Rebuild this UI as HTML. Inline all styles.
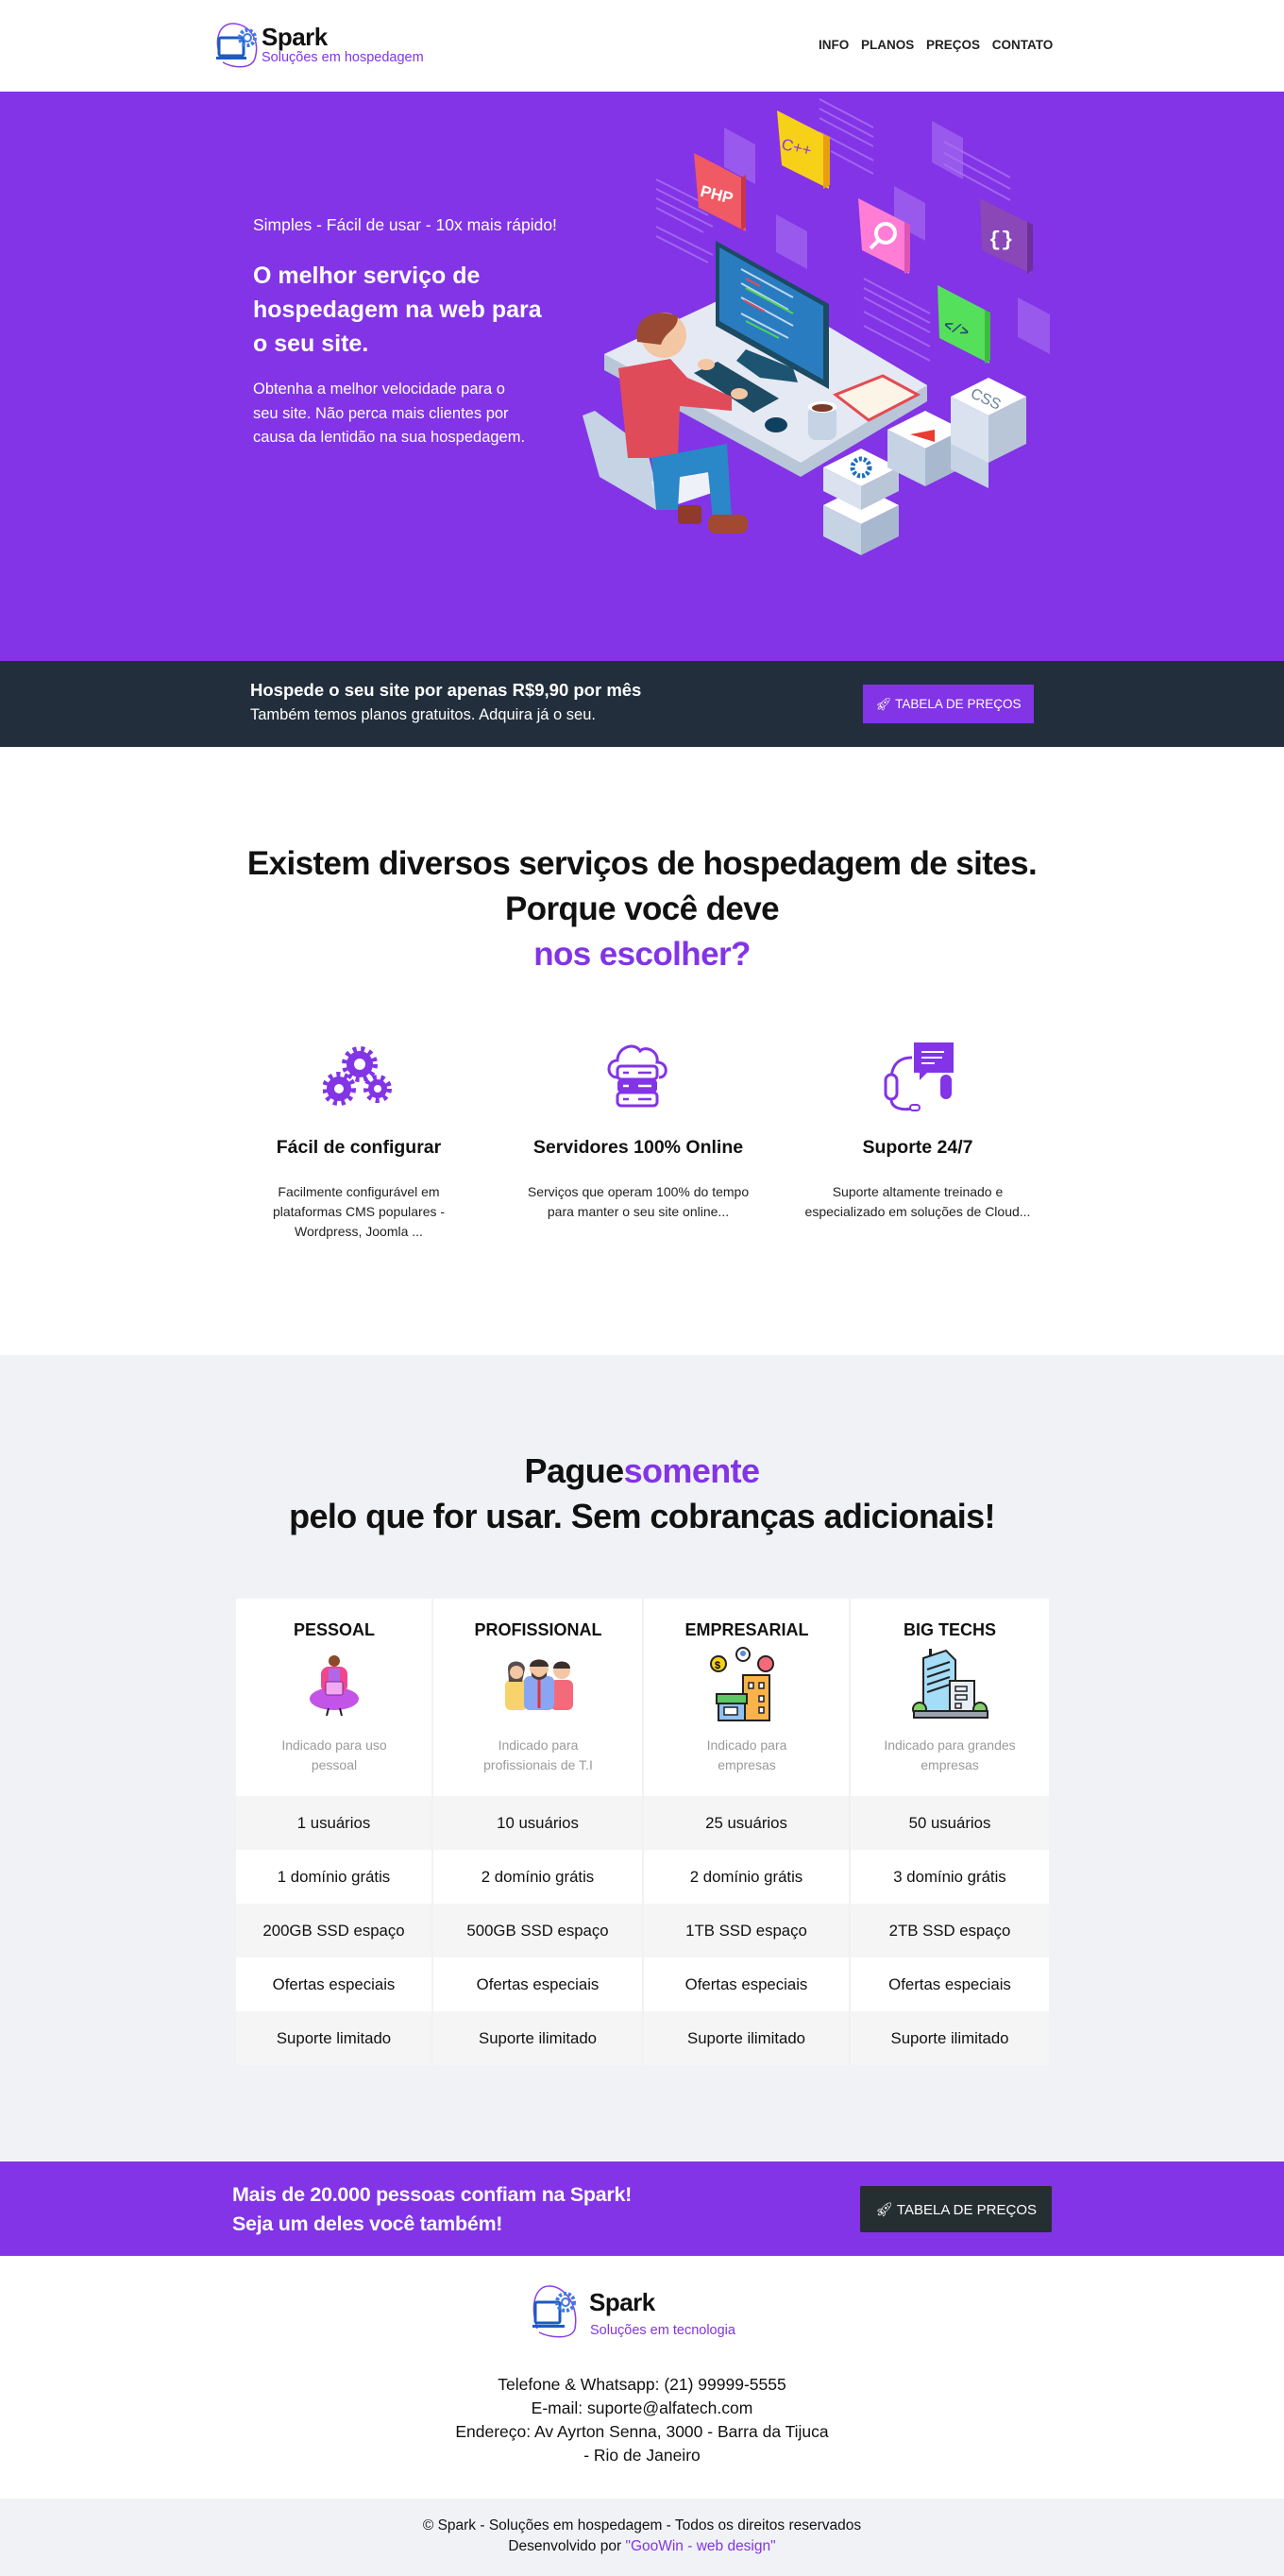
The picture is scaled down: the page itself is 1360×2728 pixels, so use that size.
<!DOCTYPE html>
<html><head><meta charset="utf-8">
<style>
*{margin:0;padding:0;box-sizing:border-box}
body{width:1360px;height:2728px;position:relative;font-family:"Liberation Sans",sans-serif;color:#111;background:#fff;overflow:hidden}
.a{position:absolute}
.c{text-align:center}
.pur{color:#8234e6}
.btn{position:absolute;display:flex;align-items:center;justify-content:center;color:#fff;font-size:15px;gap:10px}
</style></head><body>

<!-- header -->
<svg class="a" style="left:226px;top:22px" width="52" height="52" viewBox="0 0 52 52">
<path d="M8 40 C0 20 6 2 22 3 C38 4 50 20 44 40 C40 52 20 50 10 44" fill="none" stroke="#8a3fe8" stroke-width="1.5"/>
<rect x="6" y="18" width="26" height="19" rx="2" fill="none" stroke="#1d5bbf" stroke-width="3"/>
<rect x="3" y="38" width="32" height="3" fill="#1d5bbf"/>
<circle cx="36" cy="18" r="8" fill="none" stroke="#3f7be0" stroke-width="4" stroke-dasharray="3 2"/>
<circle cx="36" cy="18" r="4" fill="#fff" stroke="#3f7be0" stroke-width="2"/>
</svg>
<div class="a" style="left:277px;top:24px;font-size:26px;font-weight:bold;letter-spacing:-0.5px">Spark</div>
<div class="a pur" style="left:277px;top:53px;font-size:14.5px">Soluções em hospedagem</div>
<div class="a" style="left:867px;top:40px;font-size:13.5px;font-weight:bold;color:#222;word-spacing:9px">INFO PLANOS PREÇOS CONTATO</div>

<!-- hero -->
<div class="a" style="left:0;top:97px;width:1360px;height:603px;background:#8234e6"></div>
<div class="a" style="left:268px;top:228px;color:#fff;font-size:17.5px">Simples - Fácil de usar - 10x mais rápido!</div>
<div class="a" style="left:268px;top:274px;color:#fff;font-size:25px;font-weight:bold;line-height:36px;width:322px">O melhor serviço de hospedagem na web para o seu site.</div>
<div class="a" style="left:268px;top:400px;color:#fff;font-size:16.5px;line-height:25.5px;white-space:nowrap">Obtenha a melhor velocidade para o<br>seu site. Não perca mais clientes por<br>causa da lentidão na sua hospedagem.</div>

<svg class="a" style="left:600px;top:100px" width="520" height="500" viewBox="0 0 520 500">
<g fill="#9f63ee" opacity="0.8">
<polygon points="167,35 200,53 200,95 167,77"/><polygon points="222,127 255,145 255,185 222,167"/><polygon points="347,97 380,115 380,155 347,137"/><polygon points="387,28 420,46 420,90 387,72"/><polygon points="478,215 512,233 512,275 478,257"/>
</g>
<g stroke="#a973f0" stroke-width="2" opacity="0.8">
<line x1="95" y1="90" x2="155" y2="120"/><line x1="95" y1="100" x2="150" y2="128"/><line x1="95" y1="110" x2="155" y2="140"/><line x1="95" y1="120" x2="145" y2="146"/><line x1="95" y1="140" x2="155" y2="170"/><line x1="95" y1="150" x2="150" y2="178"/>
<line x1="268" y1="5" x2="325" y2="35"/><line x1="268" y1="15" x2="325" y2="45"/><line x1="268" y1="25" x2="325" y2="55"/><line x1="268" y1="40" x2="325" y2="70"/><line x1="280" y1="60" x2="325" y2="84"/>
<line x1="315" y1="195" x2="385" y2="232"/><line x1="315" y1="205" x2="385" y2="242"/><line x1="315" y1="215" x2="385" y2="252"/><line x1="315" y1="230" x2="385" y2="267"/><line x1="315" y1="245" x2="385" y2="282"/>
<line x1="400" y1="50" x2="470" y2="88"/><line x1="400" y1="62" x2="470" y2="100"/><line x1="400" y1="74" x2="470" y2="112"/>
</g>
<polygon points="135,62 185,88 190,145 140,120" fill="#ef5a64"/><polygon points="185,88 190,85 190,140 185,145" fill="#c9364a"/>
<text x="142" y="112" font-family="Liberation Sans" font-weight="bold" font-size="17" fill="#fff" transform="rotate(14 160 105)">PHP</text>
<polygon points="223,17 272,42 278,100 228,75" fill="#f7d117"/><polygon points="272,42 279,45 279,96 272,100" fill="#e79f0f"/>
<text x="228" y="62" font-family="Liberation Sans" font-size="17" fill="#8a3fd0" transform="rotate(14 245 55)">C++</text>
<polygon points="309,110 358,135 363,190 313,165" fill="#ff7dd4"/><polygon points="358,135 364,138 364,187 358,190" fill="#dd55b6"/>
<circle cx="338" cy="147" r="10" fill="none" stroke="#fff" stroke-width="4"/><line x1="330" y1="155" x2="322" y2="163" stroke="#fff" stroke-width="4"/>
<polygon points="438,110 488,135 493,190 440,165" fill="#8a47b8"/><polygon points="488,135 494,138 494,186 488,190" fill="#6d2f9b"/>
<text x="447" y="160" font-family="Liberation Mono" font-weight="bold" font-size="22" fill="#fff">{}</text>
<polygon points="393,202 443,228 448,285 395,258" fill="#55e05b"/><polygon points="443,228 449,231 449,281 443,285" fill="#3cba42"/>
<text x="400" y="255" font-family="Liberation Mono" font-weight="bold" font-size="15" fill="#24486a" transform="rotate(20 420 248)">&lt;/&gt;</text>
<polygon points="40,275 200,200 382,308 382,325 248,405 40,292" fill="#b9c6d8"/>
<polygon points="40,275 200,200 382,308 248,390" fill="#e5e9f3"/>
<polygon points="190,270 240,290 245,305 205,300 180,282" fill="#1c5472"/>
<polygon points="158,155 278,222 278,312 158,245" fill="#1b4a63"/>
<polygon points="162,162 272,224 272,302 162,240" fill="#2a7cc1"/>
<g stroke="#fff" stroke-width="2" opacity="0.7"><line x1="185" y1="185" x2="240" y2="215"/><line x1="185" y1="200" x2="235" y2="228"/><line x1="185" y1="215" x2="240" y2="245"/><line x1="185" y1="232" x2="235" y2="258"/></g>
<g stroke="#4fd35a" stroke-width="2"><line x1="190" y1="205" x2="240" y2="232"/><line x1="190" y1="240" x2="225" y2="258"/></g>
<g stroke="#e04b5a" stroke-width="2"><line x1="190" y1="195" x2="205" y2="203"/><line x1="188" y1="218" x2="210" y2="230"/></g>
<polygon points="135,295 160,283 225,322 198,337" fill="#1d4b63"/>
<ellipse cx="222" cy="350" rx="12" ry="8" fill="#0f4060"/>
<polygon points="285,318 335,298 372,318 320,345" fill="#fdf4e8" stroke="#e34a52" stroke-width="3"/>
<rect x="256" y="330" width="30" height="36" rx="8" fill="#c5d3e5"/><ellipse cx="271" cy="331" rx="15" ry="6" fill="#fff"/><ellipse cx="271" cy="332" rx="11" ry="4" fill="#7a3b28"/>
<polygon points="17,340 30,335 85,375 100,435 95,440 35,405" fill="#c5d3e5"/>
<polygon points="90,410 150,400 160,420 100,440" fill="#eef1f7"/>
<polygon points="55,290 110,280 128,300 175,320 175,335 120,330 118,385 65,385" fill="#e04b5a"/>
<polygon points="90,385 170,370 175,450 155,450 150,400 120,405 118,440 95,440" fill="#2a87c8"/>
<rect x="118" y="435" width="25" height="20" rx="4" fill="#8f3a2b"/><rect x="150" y="445" width="42" height="20" rx="8" fill="#a2492f"/>
<circle cx="103" cy="255" r="24" fill="#f3c6a4"/><path d="M75 262 C70 235 95 225 118 235 C118 250 105 250 100 265 Z" fill="#9a4a33"/>
<ellipse cx="183" cy="317" rx="9" ry="6" fill="#f3c6a4"/><ellipse cx="148" cy="286" rx="9" ry="6" fill="#f3c6a4"/>
<g>
<polygon points="272,435 312,415 352,435 312,455" fill="#fff"/><polygon points="272,435 312,455 312,488 272,468" fill="#c5d3e5"/><polygon points="352,435 312,455 312,488 352,468" fill="#a8b9cf"/>
<polygon points="272,395 312,375 352,395 312,415" fill="#fff"/><polygon points="272,395 312,415 312,440 272,420" fill="#d9e2ee"/><polygon points="352,395 312,415 312,440 352,420" fill="#b9c6d8"/>
<circle cx="312" cy="395" r="9" fill="none" stroke="#1d6cc0" stroke-width="5" stroke-dasharray="3 2"/>
<polygon points="340,355 380,335 420,355 380,375" fill="#fff"/><polygon points="340,355 380,375 380,415 340,395" fill="#c5d3e5"/><polygon points="420,355 380,375 380,415 420,395" fill="#a8b9cf"/>
<polygon points="364,360 390,355 390,368" fill="#ea3c30"/>
<polygon points="407,357 447,377 447,417 407,397" fill="#c5d3e5"/>
<polygon points="407,320 447,300 487,320 447,340" fill="#fff"/><polygon points="407,320 447,340 447,390 407,370" fill="#d9e2ee"/><polygon points="487,320 447,340 447,390 487,370" fill="#b9c6d8"/>
<text x="428" y="328" font-family="Liberation Sans" font-size="16" fill="#6a7f98" transform="rotate(25 445 322)">CSS</text>
</g>
</svg>

<!-- dark band -->
<div class="a" style="left:0;top:700px;width:1360px;height:91px;background:#222e3b"></div>
<div class="a" style="left:265px;top:720px;color:#fff;font-size:18.5px;font-weight:bold">Hospede o seu site por apenas R$9,90 por mês</div>
<div class="a" style="left:265px;top:748px;color:#fff;font-size:16.5px">Também temos planos gratuitos. Adquira já o seu.</div>
<div class="btn" style="left:914px;top:725px;width:181px;height:41px;background:#8234e6;font-size:13.5px">&#x1F680;&#xFE0E; TABELA DE PREÇOS</div>

<!-- services -->
<div class="a c" style="left:0;top:891px;width:1360px;font-size:35px;font-weight:bold;line-height:48px;letter-spacing:-0.6px">Existem diversos serviços de hospedagem de sites.<br>Porque você deve<br><span class="pur">nos escolher?</span></div>
<svg class="a" style="left:342px;top:1107px" width="76" height="66" viewBox="0 0 76 66">
<g fill="#8234e6">
<circle cx="39" cy="20" r="14"/><circle cx="17" cy="46" r="13"/><circle cx="58" cy="46" r="10"/>
<g stroke="#8234e6" stroke-width="6" stroke-dasharray="4 4.5" fill="none"><circle cx="39" cy="20" r="16"/><circle cx="17" cy="46" r="15"/><circle cx="58" cy="46" r="12"/></g>
</g>
<circle cx="39" cy="20" r="6" fill="#fff"/><circle cx="17" cy="46" r="5" fill="#fff"/><circle cx="58" cy="46" r="4" fill="#fff"/>
</svg>
<svg class="a" style="left:640px;top:1105px" width="72" height="72" viewBox="0 0 72 72">
<path d="M14 36 C2 36 2 18 14 18 C14 4 32 -2 38 8 C44 2 58 8 56 20 C68 20 68 36 58 36" fill="none" stroke="#8234e6" stroke-width="3"/>
<rect x="14" y="24" width="42" height="14" rx="4" fill="#fff" stroke="#8234e6" stroke-width="3"/>
<rect x="14" y="38" width="42" height="14" rx="4" fill="#8234e6"/>
<rect x="14" y="52" width="42" height="14" rx="4" fill="#fff" stroke="#8234e6" stroke-width="3"/>
<g stroke="#8234e6" stroke-width="2.5"><line x1="20" y1="31" x2="26" y2="31"/><line x1="36" y1="31" x2="50" y2="31"/><line x1="20" y1="59" x2="26" y2="59"/><line x1="36" y1="59" x2="50" y2="59"/></g>
<g stroke="#fff" stroke-width="2.5"><line x1="20" y1="45" x2="26" y2="45"/><line x1="36" y1="45" x2="50" y2="45"/></g>
</svg>
<svg class="a" style="left:936px;top:1104px" width="76" height="74" viewBox="0 0 76 74">
<rect x="32" y="0" width="42" height="32" fill="#8234e6"/><polygon points="38,32 46,32 38,40" fill="#8234e6"/>
<g stroke="#fff" stroke-width="2"><line x1="40" y1="10" x2="64" y2="10"/><line x1="40" y1="16" x2="62" y2="16"/><line x1="40" y1="22" x2="54" y2="22"/></g>
<path d="M8 40 C8 22 18 16 30 16" fill="none" stroke="#8234e6" stroke-width="3"/>
<rect x="2" y="34" width="12" height="26" rx="6" fill="#fff" stroke="#8234e6" stroke-width="3"/>
<rect x="60" y="34" width="12" height="26" rx="6" fill="#8234e6"/>
<path d="M8 60 C8 70 20 72 30 70" fill="none" stroke="#8234e6" stroke-width="3"/>
<rect x="28" y="66" width="10" height="6" rx="3" fill="#fff" stroke="#8234e6" stroke-width="2"/>
</svg>
<div class="a c" style="left:230px;top:1204px;width:300px;font-size:19.5px;font-weight:bold">Fácil de configurar</div>
<div class="a c" style="left:526px;top:1204px;width:300px;font-size:19.5px;font-weight:bold">Servidores 100% Online</div>
<div class="a c" style="left:822px;top:1204px;width:300px;font-size:19.5px;font-weight:bold">Suporte 24/7</div>
<div class="a c" style="left:272px;top:1252px;width:216px;font-size:14px;line-height:21px;color:#222">Facilmente configurável em plataformas CMS populares - Wordpress, Joomla ...</div>
<div class="a c" style="left:546px;top:1252px;width:260px;font-size:14px;line-height:21px;color:#222">Serviços que operam 100% do tempo para manter o seu site online...</div>
<div class="a c" style="left:838px;top:1252px;width:268px;font-size:14px;line-height:21px;color:#222">Suporte altamente treinado e especializado em soluções de Cloud...</div>

<!-- pricing -->
<div class="a" style="left:0;top:1435px;width:1360px;height:853px;background:#f0f2f5"></div>
<div class="a c" style="left:0;top:1534px;width:1360px;font-size:36px;font-weight:bold;line-height:48px;letter-spacing:-0.6px">Pague<span class="pur">somente</span><br>pelo que for usar. Sem cobranças adicionais!</div>

<div class="a" style="left:250px;top:1693px;width:861px">
<div style="display:flex;gap:2px;height:209px">
<div style="width:207px;background:#fff"></div><div style="width:221px;background:#fff"></div><div style="width:217px;background:#fff"></div><div style="width:210px;background:#fff"></div>
</div>
</div>
<div class="a c" style="left:250px;top:1716px;width:208px;font-size:18px;font-weight:bold">PESSOAL</div>
<div class="a c" style="left:459px;top:1716px;width:222px;font-size:18px;font-weight:bold">PROFISSIONAL</div>
<div class="a c" style="left:682px;top:1716px;width:218px;font-size:18px;font-weight:bold">EMPRESARIAL</div>
<div class="a c" style="left:901px;top:1716px;width:210px;font-size:18px;font-weight:bold">BIG TECHS</div>
<div class="a c" style="left:279px;top:1838px;width:150px;font-size:14px;line-height:21px;color:#9a9a9a">Indicado para uso pessoal</div>
<div class="a c" style="left:495px;top:1838px;width:150px;font-size:14px;line-height:21px;color:#9a9a9a">Indicado para profissionais de T.I</div>
<div class="a c" style="left:726px;top:1838px;width:130px;font-size:14px;line-height:21px;color:#9a9a9a">Indicado para empresas</div>
<div class="a c" style="left:918px;top:1838px;width:176px;font-size:14px;line-height:21px;color:#9a9a9a">Indicado para grandes empresas</div>
<svg class="a" style="left:326px;top:1751px" width="56" height="66" viewBox="0 0 56 66">
<ellipse cx="28" cy="48" rx="26" ry="12" fill="#c255e8"/><rect x="14" y="14" width="28" height="28" rx="8" fill="#f0468e"/><rect x="22" y="16" width="12" height="20" fill="#b068e8"/>
<circle cx="28" cy="8" r="6" fill="#8b4a2b"/><rect x="19" y="30" width="18" height="14" rx="2" fill="#f2a8f2" stroke="#7a2a9a"/>
<line x1="22" y1="58" x2="20" y2="66" stroke="#222" stroke-width="2"/><line x1="34" y1="58" x2="36" y2="66" stroke="#222" stroke-width="2"/>
</svg>
<svg class="a" style="left:533px;top:1755px" width="76" height="56" viewBox="0 0 76 56">
<rect x="2" y="24" width="24" height="32" rx="6" fill="#f6d36b"/><rect x="50" y="24" width="24" height="32" rx="6" fill="#f36b7a"/><rect x="22" y="20" width="32" height="36" rx="6" fill="#8aa6f2"/>
<line x1="38" y1="24" x2="38" y2="54" stroke="#e2333b" stroke-width="3"/>
<path d="M5 12 C5 2 22 2 23 12 L20 26 L6 26 Z" fill="#3a2f2f" opacity=".85"/><circle cx="14" cy="16" r="7" fill="#f3c6a4"/>
<circle cx="38" cy="12" r="10" fill="#f3c6a4"/><path d="M28 10 C28 0 48 0 48 10 Z" fill="#3a2f2f"/><path d="M30 16 Q38 26 46 16 L46 20 Q38 28 30 20Z" fill="#4a3a36"/>
<circle cx="62" cy="14" r="9" fill="#f3c6a4"/><path d="M53 12 C53 2 71 2 71 12 Z" fill="#3a2f2f"/>
</svg>
<svg class="a" style="left:751px;top:1744px" width="80" height="80" viewBox="0 0 80 80">
<circle cx="10" cy="18" r="8" fill="#f7d117" stroke="#222" stroke-width="2"/><text x="6" y="23" font-size="11" font-family="Liberation Sans" font-weight="bold">$</text>
<circle cx="36" cy="8" r="7" fill="#fff" stroke="#222" stroke-width="2"/><circle cx="36" cy="7" r="3" fill="#5a8adf"/>
<circle cx="60" cy="18" r="8" fill="#f36b7a" stroke="#222" stroke-width="2"/>
<rect x="36" y="30" width="28" height="48" fill="#f9b34a" stroke="#222" stroke-width="2"/>
<g fill="#fff" stroke="#222" stroke-width="1.5"><rect x="42" y="38" width="5" height="6"/><rect x="53" y="38" width="5" height="6"/><rect x="53" y="52" width="5" height="6"/><rect x="53" y="64" width="5" height="6"/></g>
<rect x="10" y="56" width="28" height="22" fill="#8fc1f2" stroke="#222" stroke-width="2"/><path d="M8 50 L40 50 L40 60 L8 60Z" fill="#5cc864" stroke="#222" stroke-width="2"/><rect x="16" y="64" width="14" height="8" fill="#fff" stroke="#222" stroke-width="1.5"/>
</svg>
<svg class="a" style="left:966px;top:1744px" width="82" height="76" viewBox="0 0 82 76">
<rect x="18" y="2" width="3" height="10" fill="#222"/>
<polygon points="12,12 36,4 46,14 46,74 12,74" fill="#a5dcf7" stroke="#222" stroke-width="2"/>
<g stroke="#222" stroke-width="2"><line x1="16" y1="24" x2="40" y2="16"/><line x1="16" y1="32" x2="40" y2="24"/><line x1="16" y1="40" x2="40" y2="32"/><line x1="16" y1="48" x2="40" y2="40"/></g>
<rect x="40" y="36" width="26" height="38" fill="#e8eef5" stroke="#222" stroke-width="2"/>
<g fill="none" stroke="#222" stroke-width="1.5"><rect x="46" y="42" width="12" height="5"/><rect x="46" y="51" width="12" height="5"/><rect x="46" y="60" width="6" height="5"/></g>
<circle cx="8" cy="66" r="7" fill="#86d06a" stroke="#222" stroke-width="2"/><circle cx="72" cy="66" r="7" fill="#86d06a" stroke="#222" stroke-width="2"/>
<rect x="2" y="68" width="78" height="7" fill="#9aa3ad" stroke="#222" stroke-width="2"/>
</svg>

<div class="a" style="left:250px;top:1902px;width:861px;font-size:16.8px;color:#111">
<div style="display:flex;gap:2px;height:57px"><div style="width:207px;background:#f5f5f6;line-height:57px" class="c">1 usuários</div><div style="width:221px;background:#f5f5f6;line-height:57px" class="c">10 usuários</div><div style="width:217px;background:#f5f5f6;line-height:57px" class="c">25 usuários</div><div style="width:210px;background:#f5f5f6;line-height:57px" class="c">50 usuários</div></div>
<div style="display:flex;gap:2px;height:57px"><div style="width:207px;background:#fff;line-height:57px" class="c">1 domínio grátis</div><div style="width:221px;background:#fff;line-height:57px" class="c">2 domínio grátis</div><div style="width:217px;background:#fff;line-height:57px" class="c">2 domínio grátis</div><div style="width:210px;background:#fff;line-height:57px" class="c">3 domínio grátis</div></div>
<div style="display:flex;gap:2px;height:57px"><div style="width:207px;background:#f5f5f6;line-height:57px" class="c">200GB SSD espaço</div><div style="width:221px;background:#f5f5f6;line-height:57px" class="c">500GB SSD espaço</div><div style="width:217px;background:#f5f5f6;line-height:57px" class="c">1TB SSD espaço</div><div style="width:210px;background:#f5f5f6;line-height:57px" class="c">2TB SSD espaço</div></div>
<div style="display:flex;gap:2px;height:57px"><div style="width:207px;background:#fff;line-height:57px" class="c">Ofertas especiais</div><div style="width:221px;background:#fff;line-height:57px" class="c">Ofertas especiais</div><div style="width:217px;background:#fff;line-height:57px" class="c">Ofertas especiais</div><div style="width:210px;background:#fff;line-height:57px" class="c">Ofertas especiais</div></div>
<div style="display:flex;gap:2px;height:57px"><div style="width:207px;background:#f5f5f6;line-height:57px" class="c">Suporte limitado</div><div style="width:221px;background:#f5f5f6;line-height:57px" class="c">Suporte ilimitado</div><div style="width:217px;background:#f5f5f6;line-height:57px" class="c">Suporte ilimitado</div><div style="width:210px;background:#f5f5f6;line-height:57px" class="c">Suporte ilimitado</div></div>
</div>

<!-- CTA -->
<div class="a" style="left:0;top:2289px;width:1360px;height:100px;background:#8234e6"></div>
<div class="a" style="left:246px;top:2309px;color:#fff;font-size:21.5px;font-weight:bold;line-height:31px;letter-spacing:-0.3px">Mais de 20.000 pessoas confiam na Spark!<br>Seja um deles você também!</div>
<div class="btn" style="left:911px;top:2315px;width:203px;height:49px;background:#252e31;border-radius:2px;font-size:15px">&#x1F680;&#xFE0E; TABELA DE PREÇOS</div>

<!-- footer -->
<svg class="a" style="left:561px;top:2418px" width="56" height="60" viewBox="0 0 56 60">
<path d="M8 48 C0 22 6 2 22 3 C38 4 52 24 48 48 C45 60 22 58 10 52" fill="none" stroke="#8a3fe8" stroke-width="1.5"/>
<rect x="6" y="20" width="26" height="22" rx="2" fill="none" stroke="#1d5bbf" stroke-width="3"/>
<rect x="3" y="44" width="34" height="3" fill="#1d5bbf"/>
<circle cx="38" cy="20" r="9" fill="none" stroke="#3f7be0" stroke-width="4" stroke-dasharray="3 2"/>
<circle cx="38" cy="20" r="4" fill="#fff" stroke="#3f7be0" stroke-width="2"/>
</svg>
<div class="a" style="left:624px;top:2423px;font-size:26px;font-weight:bold;letter-spacing:-0.5px">Spark</div>
<div class="a pur" style="left:625px;top:2460px;font-size:14.5px">Soluções em tecnologia</div>
<div class="a c" style="left:400px;top:2513px;width:560px;font-size:17.5px;line-height:25px;color:#111">Telefone &amp; Whatsapp: (21) 99999-5555<br>E-mail: suporte@alfatech.com<br>Endereço: Av Ayrton Senna, 3000 - Barra da Tijuca<br>- Rio de Janeiro</div>

<div class="a" style="left:0;top:2646px;width:1360px;height:82px;background:#f0f2f5"></div>
<div class="a c" style="left:0;top:2664px;width:1360px;font-size:15.5px;line-height:22px;color:#111">© Spark - Soluções em hospedagem - Todos os direitos reservados<br>Desenvolvido por <span class="pur">"GooWin - web design"</span></div>
</body></html>
